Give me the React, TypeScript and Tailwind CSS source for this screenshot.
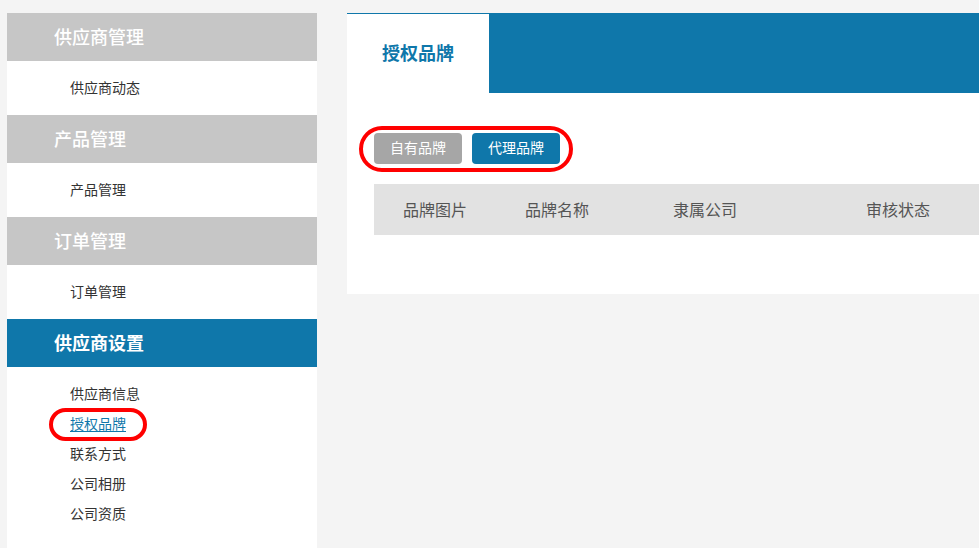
const groups = [
  { title: "供应商管理", items: ["供应商动态"] },
  { title: "产品管理", items: ["产品管理"] },
  { title: "订单管理", items: ["订单管理"] },
]

const settings = ["供应商信息", "授权品牌", "联系方式", "公司相册", "公司资质"]

const columns = [
  { label: "品牌图片", width: "w-[151px] pl-[29px]" },
  { label: "品牌名称", width: "w-[148px]" },
  { label: "隶属公司", width: "w-[193px]" },
  { label: "审核状态", width: "w-[200px]" },
]

export default function App() {
  return (
    <div
      className="flex h-[548px] w-[979px] overflow-hidden bg-[#f4f4f4] pt-[13px] pl-[7px]"
      style={{ fontFamily: '"Noto Sans CJK SC", "Noto Sans", sans-serif' }}
    >
      {/* sidebar */}
      <aside className="w-[310px] shrink-0 self-stretch bg-white">
        {groups.map((group) => (
          <div key={group.title}>
            <div className="flex h-[48px] items-center bg-[#c6c6c6] pb-[2px] pl-[47px] text-[18px] font-medium text-white">
              {group.title}
            </div>
            {group.items.map((item) => (
              <div key={item} className="flex h-[54px] items-center pb-[2px] pl-[63px] text-[14px] text-[#333]">
                {item}
              </div>
            ))}
          </div>
        ))}
        <div className="flex h-[48px] items-center bg-[#0f77aa] pb-[2px] pl-[47px] text-[18px] font-semibold text-white">
          供应商设置
        </div>
        <ul className="pt-[11px] pl-[63px]">
          {settings.map((item) =>
            item === "授权品牌" ? (
              <li key={item} className="relative flex h-[30px] items-center text-[14px]">
                <span className="text-[#0f77aa] underline underline-offset-2">{item}</span>
                <span className="pointer-events-none absolute top-[0px] left-[-21px] h-[33px] w-[98px] rounded-full border-[4px] border-[#ff0000]" />
              </li>
            ) : (
              <li key={item} className="flex h-[30px] items-center text-[14px] text-[#333]">
                {item}
              </li>
            )
          )}
        </ul>
      </aside>

      {/* main panel */}
      <main className="ml-[30px] h-[281px] flex-1 border-t border-[#0f77aa] bg-white">
        <div className="flex h-[79px]">
          <div className="flex w-[142px] items-center justify-center pb-[2px] text-[18px] font-bold text-[#0f77aa]">
            授权品牌
          </div>
          <div className="flex-1 bg-[#0f77aa]" />
        </div>

        <div className="pl-[27px] pt-[40px]">
          <div className="relative flex gap-[10px]">
            <button className="flex h-[31px] w-[88px] items-center justify-center rounded-[4px] bg-[#a6a6a6] pb-[2px] text-[14px] text-white">
              自有品牌
            </button>
            <button className="flex h-[31px] w-[88px] items-center justify-center rounded-[4px] bg-[#0f77aa] pb-[2px] text-[14px] text-white">
              代理品牌
            </button>
            <span className="pointer-events-none absolute top-[-7px] left-[-15px] h-[46px] w-[214px] rounded-full border-[4px] border-[#ff0000]" />
          </div>

          <div className="mt-[20px] flex h-[51px] items-center bg-[#e2e2e2] pb-[2px] text-[16px] text-[#555]">
            {columns.map((col) => (
              <div key={col.label} className={`${col.width} shrink-0`}>
                {col.label}
              </div>
            ))}
          </div>
        </div>
      </main>
    </div>
  )
}
